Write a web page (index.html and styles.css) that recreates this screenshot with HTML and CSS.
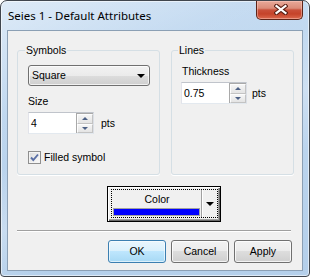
FILE: index.html
```html
<!DOCTYPE html>
<html>
<head>
<meta charset="utf-8">
<title>Seies 1 - Default Attributes</title>
<link rel="stylesheet" href="styles.css">
</head>
<body>
<div class="window">
  <div class="titlebar">
    <span class="title">Seies 1 - Default Attributes</span>
    <div class="close">
      <svg width="14" height="11" viewBox="0 0 14 11">
        <path d="M2.5 2 L11.5 9 M11.5 2 L2.5 9" stroke="#5a1f14" stroke-width="4.2" stroke-linecap="square" fill="none"/>
        <path d="M2.5 2 L11.5 9 M11.5 2 L2.5 9" stroke="#ffffff" stroke-width="2.2" stroke-linecap="square" fill="none"/>
      </svg>
    </div>
  </div>
  <div class="client">
    <div class="groups">
      <fieldset class="group group-symbols">
        <legend>Symbols</legend>
        <div class="combo"><span class="combo-text">Square</span><span class="combo-arrow"></span></div>
        <div class="label label-size">Size</div>
        <div class="spin-row">
          <div class="spin">
            <span class="spin-value">4</span>
            <div class="spin-buttons">
              <div class="spin-btn"><span class="tri-up"></span></div>
              <div class="spin-btn"><span class="tri-down"></span></div>
            </div>
          </div>
          <span class="unit">pts</span>
        </div>
        <div class="check-row">
          <span class="checkbox">
            <svg width="11" height="11" viewBox="0 0 11 11"><path d="M2 5.5 L4.3 8 L9 2.5" stroke="#5a6fa5" stroke-width="1.9" fill="none"/></svg>
          </span>
          <span class="check-label">Filled symbol</span>
        </div>
      </fieldset>
      <fieldset class="group group-lines">
        <legend>Lines</legend>
        <div class="label label-thick">Thickness</div>
        <div class="spin-row">
          <div class="spin">
            <span class="spin-value">0.75</span>
            <div class="spin-buttons">
              <div class="spin-btn"><span class="tri-up"></span></div>
              <div class="spin-btn"><span class="tri-down"></span></div>
            </div>
          </div>
          <span class="unit unit-lines">pts</span>
        </div>
      </fieldset>
    </div>
    <div class="color-row">
      <div class="color-btn">
        <div class="focus-rect">
          <div class="color-main">
            <span class="color-text">Color</span>
            <span class="color-bar"></span>
          </div>
          <div class="color-sep"></div>
          <div class="color-drop"><span class="drop-arrow"></span></div>
        </div>
      </div>
    </div>
    <div class="separator"></div>
    <div class="buttons">
      <div class="btn btn-default">OK</div>
      <div class="btn">Cancel</div>
      <div class="btn">Apply</div>
    </div>
  </div>
</div>
</body>
</html>
```
FILE: styles.css
```css
html, body {
  margin: 0;
  padding: 0;
  background: #ffffff;
}

.window {
  width: 310px;
  height: 277px;
  box-sizing: border-box;
  border: 1px solid #40464e;
  border-radius: 7px 7px 4px 4px;
  padding: 0 6px 5px 6px;
  display: flex;
  flex-direction: column;
  background:
    linear-gradient(155deg, rgba(255,255,255,0.45) 0%, rgba(255,255,255,0.05) 28%, rgba(255,255,255,0) 40%, rgba(255,255,255,0.25) 55%, rgba(255,255,255,0) 70%),
    linear-gradient(#c3daf1, #b4cfea);
  box-shadow: inset 0 0 0 1px rgba(255,255,255,0.55);
  font-family: "Liberation Sans", Arial, sans-serif;
  font-size: 10.5px;
  color: #000;
}

.titlebar {
  height: 29px;
  display: flex;
  justify-content: space-between;
  align-items: flex-start;
  flex: none;
}

.title {
  font-family: "Noto Sans", "Open Sans", sans-serif;
  font-size: 11.5px;
  line-height: 16px;
  padding: 7px 0 0 1px;
  color: #000;
}

.close {
  width: 47px;
  height: 19px;
  box-sizing: border-box;
  border: 1px solid #5e2418;
  border-top: 0;
  border-radius: 0 0 5px 5px;
  background: linear-gradient(#e8a999 0%, #db8c79 40%, #c9503a 50%, #c5432a 72%, #dc6a4f 100%);
  box-shadow: inset 0 0 0 1px rgba(255,210,200,0.45);
  display: flex;
  justify-content: center;
  align-items: center;
  padding: 0 0 1px 3px;
}

.client {
  flex: 1;
  border: 1px solid #8b9fb4;
  background: #f0f0f0;
  display: flex;
  flex-direction: column;
  min-height: 0;
}

.groups {
  display: flex;
  gap: 11px;
  margin: 13px 8px 0 9px;
}

.group {
  margin: 0;
  min-width: 0;
  box-sizing: border-box;
  border: 1px solid #d5dfe5;
  border-radius: 3px;
  box-shadow: 0 1px 0 #ffffff;
}

.group-symbols {
  width: 143px;
  padding: 0 9px 10px 10px;
}

.group-lines {
  flex: 1;
  padding: 0 9px 10px 9px;
}

legend {
  padding: 0 1px;
  margin-left: -3px;
  line-height: 13px;
}

.combo {
  margin-top: 8px;
  width: 122px;
  height: 21px;
  box-sizing: border-box;
  border: 1px solid #707070;
  border-radius: 3px;
  background: linear-gradient(#f2f2f2 0%, #ebebeb 50%, #dddddd 50%, #cfcfcf 100%);
  box-shadow: inset 0 0 0 1px rgba(255,255,255,0.7);
  display: flex;
  align-items: center;
  justify-content: space-between;
  padding: 0 4px 0 3px;
}

.combo-text {
  line-height: 13px;
}

.combo-arrow {
  width: 0;
  height: 0;
  border-left: 4px solid transparent;
  border-right: 4px solid transparent;
  border-top: 4px solid #000;
}

.label {
  line-height: 13px;
}

.label-size {
  margin-top: 9px;
}

.label-thick {
  margin-top: 8px;
  margin-left: 1px;
}

.spin-row {
  margin-top: 4px;
  display: flex;
  align-items: center;
}

.spin {
  width: 66px;
  height: 22px;
  box-sizing: border-box;
  border: 1px solid;
  border-color: #c0c4cb #dbdfe6 #e3e9ef #e2e3ea;
  background: #fff;
  display: flex;
  align-items: center;
  justify-content: space-between;
}

.spin-value {
  padding-left: 2px;
  line-height: 13px;
}

.spin-buttons {
  display: flex;
  flex-direction: column;
  align-self: stretch;
  border: 1px solid #a9a9a9;
  border-right: 0;
  border-bottom: 0;
}

.spin-btn {
  width: 16px;
  flex: 1;
  box-sizing: border-box;
  border: 1px solid #c3c3c3;
  border-top-color: #fdfdfd;
  border-left-color: #fdfdfd;
  background: linear-gradient(#f5f5f5, #e4e4e4);
  display: flex;
  align-items: center;
  justify-content: center;
}

.tri-up {
  width: 0;
  height: 0;
  border-left: 3px solid transparent;
  border-right: 3px solid transparent;
  border-bottom: 3px solid #4d6185;
}

.tri-down {
  width: 0;
  height: 0;
  border-left: 3px solid transparent;
  border-right: 3px solid transparent;
  border-top: 3px solid #4d6185;
}

.unit {
  margin-left: 7px;
  line-height: 13px;
}

.unit-lines {
  margin-left: 5px;
}

.check-row {
  margin-top: 17px;
  display: flex;
  align-items: center;
  gap: 3px;
  line-height: 13px;
}

.checkbox {
  width: 13px;
  height: 13px;
  box-sizing: border-box;
  border: 1px solid #8f8f8f;
  background: linear-gradient(135deg, #dcdcdc, #fbfbfb);
  box-shadow: inset 0 0 0 1px #f4f4f4;
  display: flex;
  align-items: center;
  justify-content: center;
}

.color-row {
  margin-top: 11px;
  padding-left: 99px;
  display: flex;
}

.color-btn {
  width: 114px;
  height: 36px;
  box-sizing: border-box;
  border: 1px solid #000;
  background: #f0f0f0;
  box-shadow: inset 1px 1px 0 #ffffff, inset -1px -1px 0 #696969, inset -2px -2px 0 #a0a0a0;
  padding: 2px 2px 3px 3px;
  display: flex;
}

.focus-rect {
  flex: 1;
  border: 1px dotted #000;
  display: flex;
}

.color-main {
  flex: 1;
  display: flex;
  flex-direction: column;
  align-items: center;
  padding: 3px 0 0 1px;
}

.color-text {
  line-height: 13px;
  color: #000;
}

.color-bar {
  margin-top: 2px;
  align-self: flex-start;
  width: 87px;
  height: 8px;
  box-sizing: border-box;
  border: 1px solid #a0a0a0;
  background: #0000ff;
}

.color-sep {
  width: 1px;
  background: #a0a0a0;
  box-shadow: 1px 0 0 #ffffff;
}

.color-drop {
  width: 14px;
  display: flex;
  align-items: center;
  justify-content: center;
  padding-left: 1px;
}

.drop-arrow {
  width: 0;
  height: 0;
  border-left: 4px solid transparent;
  border-right: 4px solid transparent;
  border-top: 4px solid #000;
}

.separator {
  margin: 8px 11px 0 9px;
  height: 1px;
  background: #a0a0a0;
  box-shadow: 0 1px 0 #ffffff;
}

.buttons {
  margin-top: 9px;
  padding-right: 10px;
  display: flex;
  justify-content: flex-end;
  gap: 5px;
}

.btn {
  width: 58px;
  height: 23px;
  box-sizing: border-box;
  border: 1px solid #707070;
  border-radius: 3px;
  background: linear-gradient(#f2f2f2 0%, #ebebeb 50%, #dddddd 50%, #cfcfcf 100%);
  box-shadow: inset 0 0 0 1px rgba(255,255,255,0.75);
  display: flex;
  align-items: center;
  justify-content: center;
  line-height: 13px;
}

.btn-default {
  border-color: #3c7fb1;
  background: linear-gradient(#eaf6fd 0%, #d9f0fc 50%, #bee6fd 50%, #a7d9f5 100%);
  box-shadow: inset 0 0 0 1px rgba(255,255,255,0.6);
}
```
